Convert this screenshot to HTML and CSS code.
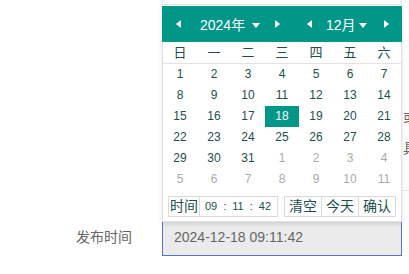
FILE: index.html
```html
<!DOCTYPE html>
<html lang="zh-CN">
<head>
    <meta charset="UTF-8">
    <meta name="viewport" content="width=device-width, initial-scale=1.0">
    <title>发布时间</title>
    <link rel="stylesheet" href="styles.css">
</head>
<body>
    <div class="page">
        <form class="form">
            <div class="item item-top">
                <label class="label"></label>
                <div class="box"></div>
            </div>
            <div class="item item-mid">
                <label class="label"></label>
                <div class="box ghost"></div>
                <div class="aside">
                    <p>或</p>
                    <p>具</p>
                </div>
            </div>
            <div class="item">
                <label class="label">发布时间</label>
                <div class="box input">2024-12-18 09:11:42</div>
            </div>
        </form>

        <!-- 日期选择弹层 -->
        <div class="laydate">
            <div class="ld-header">
                <i class="tri tri-left l1"></i>
                <span class="ld-year">2024年</span>
                <i class="tri tri-down d1"></i>
                <i class="tri tri-right r1"></i>
                <i class="tri tri-left l2"></i>
                <span class="ld-month">12月</span>
                <i class="tri tri-down d2"></i>
                <i class="tri tri-right r2"></i>
            </div>
            <div class="ld-week">
                <span>日</span><span>一</span><span>二</span><span>三</span><span>四</span><span>五</span><span>六</span>
            </div>
            <div class="ld-days">
                <span>1</span><span>2</span><span>3</span><span>4</span><span>5</span><span>6</span><span>7</span>
                <span>8</span><span>9</span><span>10</span><span>11</span><span>12</span><span>13</span><span>14</span>
                <span>15</span><span>16</span><span>17</span><span class="on">18</span><span>19</span><span>20</span><span>21</span>
                <span>22</span><span>23</span><span>24</span><span>25</span><span>26</span><span>27</span><span>28</span>
                <span>29</span><span>30</span><span>31</span><span class="next">1</span><span class="next">2</span><span class="next">3</span><span class="next">4</span>
                <span class="next">5</span><span class="next">6</span><span class="next">7</span><span class="next">8</span><span class="next">9</span><span class="next">10</span><span class="next">11</span>
            </div>
            <div class="ld-footer">
                <div class="ld-time">
                    <span class="btn">时间</span>
                    <span class="time-val"><b>09</b><b>:</b><b>11</b><b>:</b><b>42</b></span>
                </div>
                <div class="ld-btns">
                    <span class="btn">清空</span><span class="btn">今天</span><span class="btn">确认</span>
                </div>
            </div>
        </div>
    </div>
</body>
</html>
```

FILE: styles.css
```css
body { margin: 0; background: #fff; font-family: "Liberation Sans", "Noto Sans CJK SC", sans-serif; color: #666; overflow: hidden; }
.page { position: relative; width: 409px; height: 274px; overflow: hidden; }

/* 背景表单 */
.form { margin-top: -33px; }
.item { display: grid; grid-template-columns: 162px 240px 1fr; }
.item-mid { margin-top: 10px; height: 176px; }
.item-mid + .item { margin-top: 27px; }
.label { font-size: 14px; line-height: 38px; text-align: right; padding-right: 30px; color: #666; }
.box { height: 38px; border: 1px solid #e6e6e6; box-sizing: border-box; }
.ghost { height: 176px; }
.aside { border-bottom: 1px solid #e6e6e6; padding: 87px 0 0 1px; font-size: 14px; line-height: 31px; color: #666; white-space: nowrap; }
.aside p { margin: 0; }
.input {
    background: #ebebeb;
    border-color: #5a6fd1;
    padding-left: 11px;
    font-size: 14px;
    line-height: 36px;
    color: #666;
}

/* 日期弹层 */
.laydate {
    position: absolute;
    left: 162px;
    top: 6px;
    width: 240px;
    height: 216px;
    box-sizing: border-box;
    background: #fff;
    border: 1px solid #e2e2e2;
    border-top: none;
    box-shadow: 0 2px 4px rgba(0,0,0,0.12);
    color: #1d4f4b;
}
.ld-header {
    display: flex;
    align-items: center;
    height: 36px;
    margin: 0 -1px;
    background: #009688;
    color: #fff;
    font-size: 14px;
    white-space: nowrap;
}
.ld-header > * { flex: none; }
.tri { display: block; width: 0; height: 0; border-style: solid; }
.tri-left { border-width: 4.5px 5px 4.5px 0; border-color: transparent #fff transparent transparent; }
.tri-right { border-width: 4.5px 0 4.5px 5px; border-color: transparent transparent transparent #fff; }
.tri-down { border-width: 5px 4.5px 0 4.5px; border-color: #fff transparent transparent transparent; margin-top: 2px; }
.l1 { margin-left: 14px; }
.ld-year { margin-left: 19px; width: 45px; }
.d1 { margin-left: 7px; }
.r1 { margin-left: 15px; }
.l2 { margin-left: 27px; }
.ld-month { margin-left: 14px; width: 29px; }
.d2 { margin-left: 4px; }
.r2 { margin-left: 17px; }

.ld-week, .ld-days { display: grid; grid-template-columns: repeat(7, 34px); }
.ld-week { height: 21px; border-bottom: 1px solid #e2e2e2; font-size: 13px; line-height: 21px; text-align: center; }
.ld-days span { height: 21px; line-height: 21px; text-align: center; font-size: 12px; }
.ld-days .on { background: #009688; color: #fff; }
.ld-days .next { color: #aaa; }

.ld-footer { display: flex; justify-content: space-between; padding: 6px 5px 0; white-space: nowrap; }
.ld-time, .ld-btns { display: flex; }
.btn {
    display: block;
    flex: none;
    border: 1px solid #d6dcdb;
    font-size: 14px;
    line-height: 19px;
    padding: 0 1px;
    color: #1d4f4b;
}
.ld-btns .btn { padding: 0 4px; }
.ld-btns .btn + .btn { margin-left: -1px; }
.time-val {
    display: flex;
    flex: none;
    gap: 6px;
    width: 79px;
    box-sizing: border-box;
    margin-left: -1px;
    padding-left: 5px;
    border: 1px solid #d6dcdb;
    font-size: 11px;
    line-height: 19px;
}
.time-val b { font-weight: normal; }
```
